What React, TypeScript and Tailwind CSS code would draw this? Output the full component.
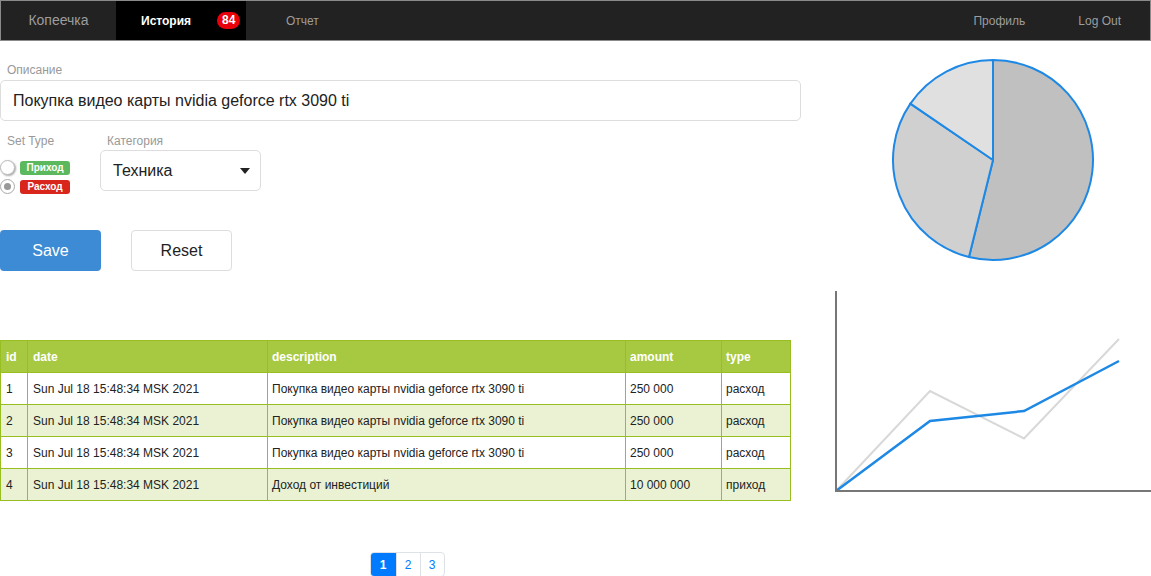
import React from 'react';

const rows = [
    { id: 1, date: 'Sun Jul 18 15:48:34 MSK 2021', description: 'Покупка видео карты nvidia geforce rtx 3090 ti', amount: '250 000', type: 'расход' },
    { id: 2, date: 'Sun Jul 18 15:48:34 MSK 2021', description: 'Покупка видео карты nvidia geforce rtx 3090 ti', amount: '250 000', type: 'расход' },
    { id: 3, date: 'Sun Jul 18 15:48:34 MSK 2021', description: 'Покупка видео карты nvidia geforce rtx 3090 ti', amount: '250 000', type: 'расход' },
    { id: 4, date: 'Sun Jul 18 15:48:34 MSK 2021', description: 'Доход от инвестиций', amount: '10 000 000', type: 'приход' },
];

// pie slice path, angles in degrees clockwise from top
const slice = (cx: number, cy: number, r: number, a0: number, a1: number) => {
    const p = (a: number) => {
        const rad = ((a - 90) * Math.PI) / 180;
        return `${cx + r * Math.cos(rad)} ${cy + r * Math.sin(rad)}`;
    };
    const large = a1 - a0 > 180 ? 1 : 0;
    return `M ${cx} ${cy} L ${p(a0)} A ${r} ${r} 0 ${large} 1 ${p(a1)} Z`;
};

function Navbar() {
    return (
        <nav className="flex h-[41px] items-stretch border border-[#8a8a8a] bg-[#222] text-[12px]">
            <a className="flex w-[115px] items-center justify-center text-[14px] text-[#9d9d9d]">Копеечка</a>
            <a className="flex w-[130px] items-center bg-black pl-[25px] font-bold text-white">
                История
                <span className="ml-[26px] rounded-full bg-[#e8000b] px-[5px] py-[1px] text-[12px] font-bold leading-[15px] text-white">84</span>
            </a>
            <a className="flex items-center pl-[40px] text-[#9d9d9d]">Отчет</a>
            <div className="ml-auto flex items-center text-[#9d9d9d]">
                <a className="mr-[53px]">Профиль</a>
                <a className="mr-[29px]">Log Out</a>
            </div>
        </nav>
    );
}

function Form() {
    return (
        <div className="flex flex-col">
            <label className="ml-[7px] mt-[22px] text-[12px] leading-[14px] text-[#999]">Описание</label>
            <div className="mt-[3px] flex h-[41px] w-[801px] items-center rounded-[5px] border border-[#ddd] pl-[12px] text-[16px] text-[#222]">
                Покупка видео карты nvidia geforce rtx 3090 ti
            </div>
            <div className="mt-[13px] flex">
                <div className="flex w-[100px] flex-col">
                    <span className="ml-[7px] text-[12px] leading-[14px] text-[#999]">Set Type</span>
                    <div className="mt-[12px] flex h-[15px] items-center">
                        <span className="h-[15px] w-[15px] rounded-full border border-[#bbb] bg-white shadow-[1px_1px_2px_rgba(0,0,0,0.35)]" />
                        <span className="ml-[5px] w-[50px] rounded-[3px] bg-[#5cb85c] text-center text-[10px] font-bold leading-[14px] text-white">Приход</span>
                    </div>
                    <div className="mt-[4px] flex h-[15px] items-center">
                        <span className="flex h-[15px] w-[15px] items-center justify-center rounded-full border border-[#aaa] bg-white">
                            <span className="h-[7px] w-[7px] rounded-full bg-[#999]" />
                        </span>
                        <span className="ml-[5px] w-[50px] rounded-[3px] bg-[#d9261c] text-center text-[10px] font-bold leading-[14px] text-white">Расход</span>
                    </div>
                </div>
                <div className="flex flex-col">
                    <span className="ml-[7px] text-[12px] leading-[14px] text-[#999]">Категория</span>
                    <div className="mt-[2px] flex h-[41px] w-[161px] items-center justify-between rounded-[5px] border border-[#ddd] pl-[12px] pr-[10px] text-[16px] text-[#222]">
                        Техника
                        <svg width="10" height="6" viewBox="0 0 10 6"><path d="M0 0h10L5 6z" fill="#222" /></svg>
                    </div>
                </div>
            </div>
            <div className="mt-[36px] flex gap-[30px]">
                <button className="h-[41px] w-[101px] rounded-[4px] bg-[#3d8bd4] text-[16px] text-white">Save</button>
                <button className="h-[41px] w-[101px] rounded-[4px] border border-[#ddd] bg-white text-[16px] text-[#222]">Reset</button>
            </div>
        </div>
    );
}

function Table() {
    return (
        <table className="mt-[69px] w-[791px] border-collapse text-[12px]">
            <thead>
                <tr className="h-[32px] bg-[#a7c942] text-left font-bold text-white">
                    <th className="w-[27px] border border-[#98bf21] pl-[5px]">id</th>
                    <th className="w-[240px] border border-[#98bf21] pl-[5px]">date</th>
                    <th className="w-[358px] border border-[#98bf21] pl-[4px]">description</th>
                    <th className="w-[96px] border border-[#98bf21] pl-[4px]">amount</th>
                    <th className="border border-[#98bf21] pl-[4px]">type</th>
                </tr>
            </thead>
            <tbody className="text-[#222]">
                {rows.map((r, i) => (
                    <tr key={r.id} className={i % 2 === 1 ? 'h-[32px] bg-[#eaf2d3]' : 'h-[32px] bg-white'}>
                        <td className="border border-[#98bf21] pl-[5px]">{r.id}</td>
                        <td className="border border-[#98bf21] pl-[5px]">{r.date}</td>
                        <td className="border border-[#98bf21] pl-[4px]">{r.description}</td>
                        <td className="border border-[#98bf21] pl-[4px]">{r.amount}</td>
                        <td className="border border-[#98bf21] pl-[4px]">{r.type}</td>
                    </tr>
                ))}
            </tbody>
        </table>
    );
}

function Pagination() {
    return (
        <div className="mt-[51px] flex justify-center pr-[21px]">
            <div className="flex h-[25px] overflow-hidden rounded-[4px] border border-[#dee2e6] text-[12px]">
                <span className="flex w-[25px] items-center justify-center bg-[#007bff] font-bold text-white">1</span>
                <span className="flex w-[24px] items-center justify-center border-l border-[#dee2e6] text-[#007bff]">2</span>
                <span className="flex w-[24px] items-center justify-center border-l border-[#dee2e6] text-[#007bff]">3</span>
            </div>
        </div>
    );
}

function Charts() {
    return (
        <div className="flex flex-1 flex-col">
            <svg width="316" height="204" className="mt-[18px]" viewBox="0 0 316 204">
                <path d={slice(158, 101, 100, 0, 193.9)} fill="#c0c0c0" stroke="#1e88e5" strokeWidth="2" />
                <path d={slice(158, 101, 100, 193.9, 304.3)} fill="#d0d0d0" stroke="#1e88e5" strokeWidth="2" />
                <path d={slice(158, 101, 100, 304.3, 360)} fill="#e0e0e0" stroke="#1e88e5" strokeWidth="2" />
            </svg>
            <svg width="316" height="204" className="mt-[28px]" viewBox="0 0 316 204">
                <polyline points="1,200 95,100 189,147.5 284,48" fill="none" stroke="#d8d8d8" strokeWidth="2" />
                <polyline points="1,200 95,130 189,120 284,70" fill="none" stroke="#1e88e5" strokeWidth="2.5" />
                <path d="M1 0 V200 H316" fill="none" stroke="#777" strokeWidth="2" />
            </svg>
        </div>
    );
}

export default function App() {
    return (
        <div className="h-[576px] overflow-hidden bg-white" style={{ fontFamily: '"Liberation Sans", Arial, sans-serif' }}>
            <Navbar />
            <div className="flex">
                <div className="flex w-[835px] flex-col">
                    <Form />
                    <Table />
                    <Pagination />
                </div>
                <Charts />
            </div>
        </div>
    );
}
